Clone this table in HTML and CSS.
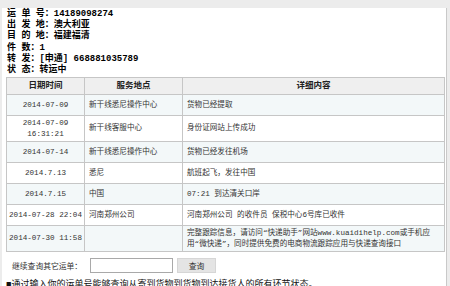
FILE: index.html
```html
<!DOCTYPE html>
<html>
<head>
<meta charset="utf-8">
<link rel="stylesheet" href="styles.css">
</head>
<body>
<div class="wrap">
  <div class="info">
    <div>运 单 号：14189098274</div>
    <div>出 发 地：澳大利亚</div>
    <div>目 的 地：福建福清</div>
    <div>件 数：1</div>
    <div>转 发：[申通] 668881035789</div>
    <div>状 态：转运中</div>
  </div>
  <table class="track">
    <colgroup><col class="c1"><col class="c2"><col class="c3"></colgroup>
    <thead>
      <tr><th>日期时间</th><th>服务地点</th><th>详细内容</th></tr>
    </thead>
    <tbody>
      <tr class="alt"><td class="d">2014-07-09</td><td>新干线悉尼操作中心</td><td>货物已经提取</td></tr>
      <tr><td class="d">2014-07-09<br>16:31:21</td><td>新干线客服中心</td><td>身份证网站上传成功</td></tr>
      <tr class="alt"><td class="d">2014-07-14</td><td>新干线悉尼操作中心</td><td>货物已经发往机场</td></tr>
      <tr><td class="d">2014.7.13</td><td>悉尼</td><td>航班起飞，发往中国</td></tr>
      <tr class="alt"><td class="d">2014.7.15</td><td>中国</td><td>07:21 到达清关口岸</td></tr>
      <tr><td class="d">2014-07-28 22:04</td><td>河南郑州公司</td><td>河南郑州公司 的收件员 保税中心6号库已收件</td></tr>
      <tr class="alt"><td class="d">2014-07-30 11:58</td><td></td><td>完整跟踪信息，请访问“快递助手”网站www.kuaidihelp.com或手机应<br>用“微快递”，同时提供免费的电商物流跟踪应用与快递查询接口</td></tr>
    </tbody>
  </table>
  <div class="query">
    <span class="lbl">继续查询其它运单：</span>
    <input class="num" type="text">
    <button class="btn">查询</button>
  </div>
  <div class="note">■通过输入你的运单号能够查询从寄到货物到货物到达接货人的所有环节状态。</div>
</div>
</body>
</html>
```
FILE: styles.css
```css
html, body { margin: 0; padding: 0; }
body {
  background: #ececec;
  font-family: "Liberation Mono", "Noto Sans CJK SC", monospace;
  color: #222;
  overflow: hidden;
}
.wrap {
  margin: 8px 0 0 2px;
  width: 444px;
  height: 300px;
  background: #fff;
  border-right: 1px solid #c9c9c9;
}
.info {
  padding-left: 5px;
  padding-top: 1px;
  font-weight: bold;
  font-size: 9px;
  line-height: 11.2px;
  color: #000;
  height: 68px;
}
.track {
  margin-left: 4px;
  width: 438px;
  border-collapse: collapse;
  table-layout: fixed;
  border: 1px solid #c6c6c6;
  font-size: 7.6px;
  color: #333;
}
.c1 { width: 78px; }
.c2 { width: 98px; }
.c3 { width: 262px; }
.track th {
  background: #efefef;
  height: 16px;
  padding: 0;
  font-size: 8.5px;
  font-weight: bold;
  color: #222;
  border: 1px solid #c6c6c6;
  line-height: 12px;
}
.track td {
  border: 1px solid #c6c6c6;
  padding: 2px 4px;
  height: 16px;
  line-height: 10.5px;
  vertical-align: middle;
  white-space: nowrap;
}
.track td.d { text-align: center; padding: 2px 2px; }
.track tr.alt td { background: #f3f8f9; }
.query {
  display: flex;
  align-items: center;
  margin-top: 5px;
  padding-left: 10px;
  height: 16px;
  font-size: 7.8px;
  color: #333;
}
.lbl { width: 78px; }
.num {
  width: 81px;
  height: 13px;
  border: 1px solid #a9a9a9;
  padding: 0;
  margin: 0;
}
.btn {
  margin-left: 4px;
  width: 39px;
  height: 15px;
  background: #e4e4e4;
  border: 1px solid #d6d6d6;
  padding: 0;
  font-family: "Noto Sans CJK SC", sans-serif;
  font-size: 7.8px;
  color: #333;
}
.note {
  margin-top: 7px;
  padding-left: 4px;
  font-size: 9px;
  line-height: 11px;
  color: #111;
}
```
